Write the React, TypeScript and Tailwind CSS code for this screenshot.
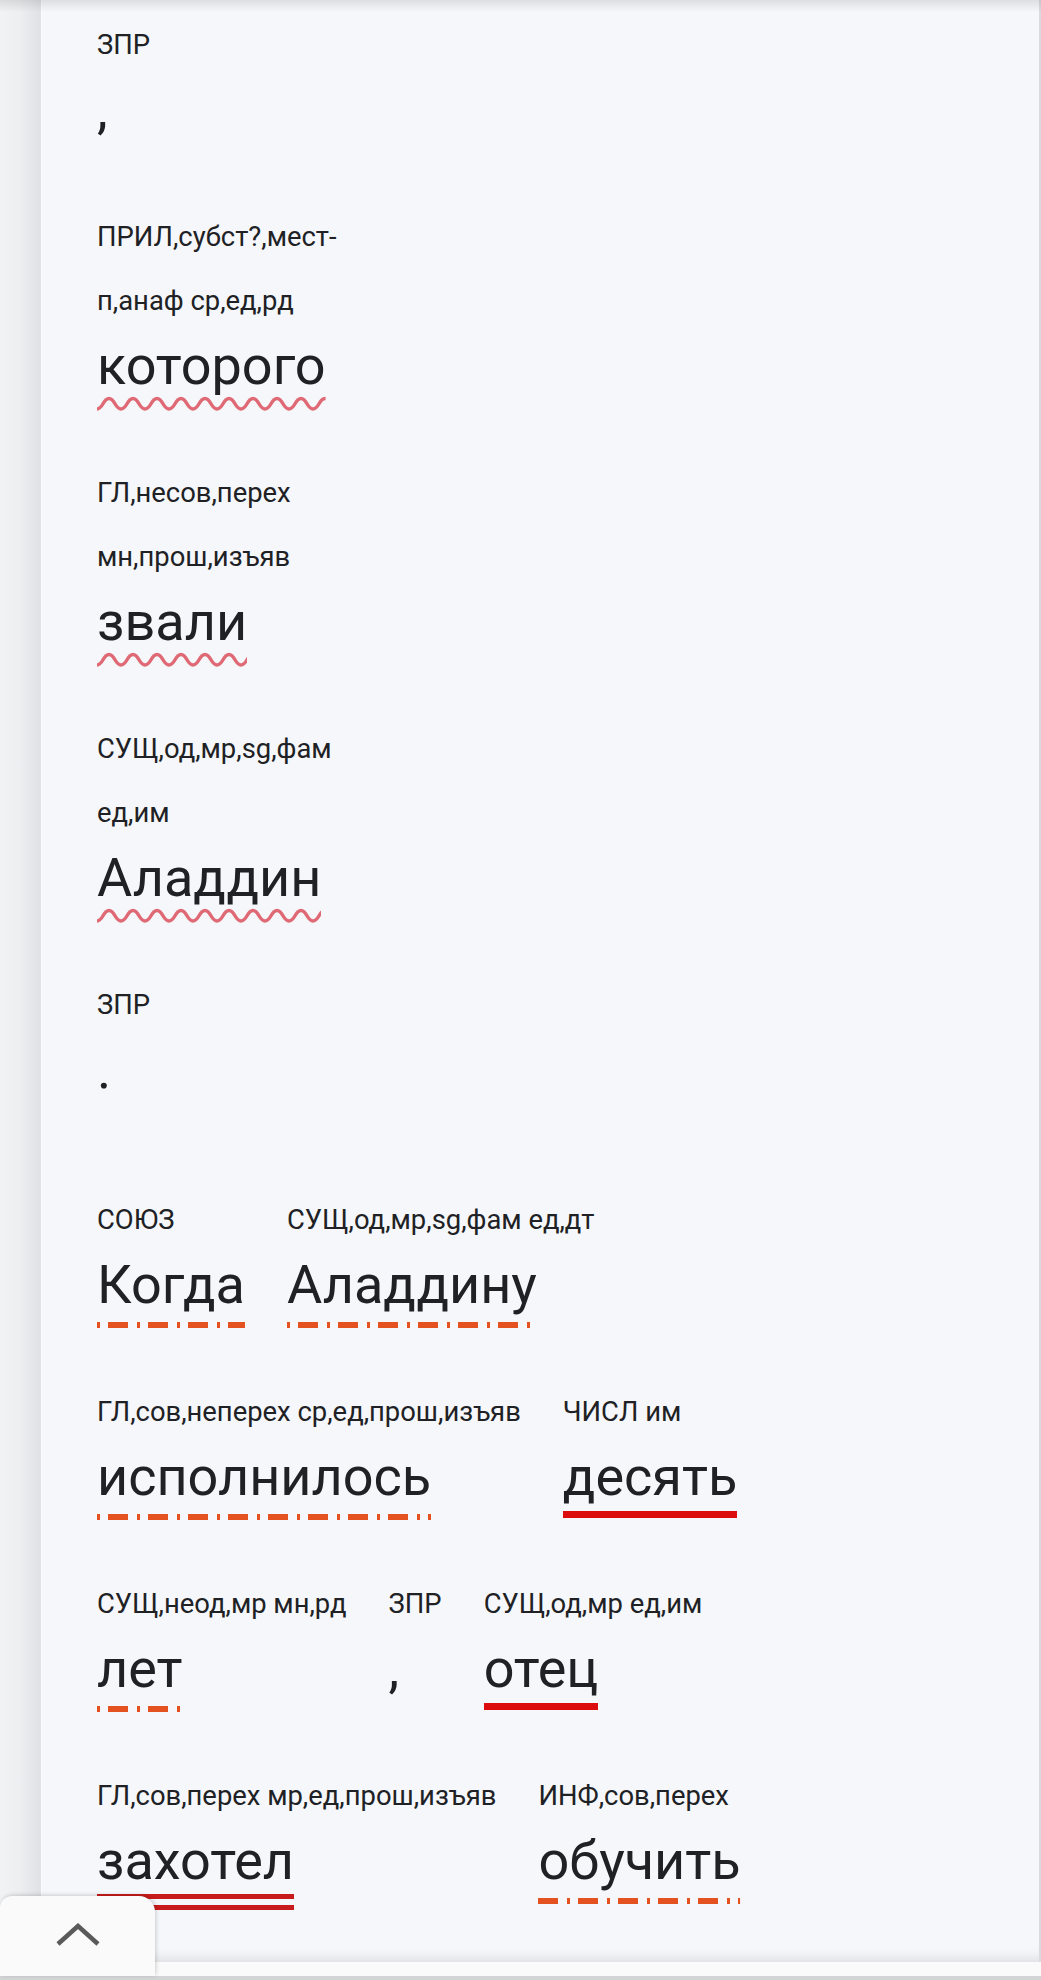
import { useId } from "react";

type Mark = "wavy" | "dashdot" | "solid" | "double" | null;

type Token = {
  label: string[];
  word: string;
  mark: Mark;
  phase?: number;
};

const tail: Token[] = [
  { label: ["ЗПР"], word: ",", mark: null },
  { label: ["ПРИЛ,субст?,мест-", "п,анаф ср,ед,рд"], word: "которого", mark: "wavy" },
  { label: ["ГЛ,несов,перех", "мн,прош,изъяв"], word: "звали", mark: "wavy" },
  { label: ["СУЩ,од,мр,sg,фам", "ед,им"], word: "Аладдин", mark: "wavy" },
  { label: ["ЗПР"], word: ".", mark: null },
];

const rows: Token[][] = [
  [
    { label: ["СОЮЗ"], word: "Когда", mark: "dashdot" },
    { label: ["СУЩ,од,мр,sg,фам ед,дт"], word: "Аладдину", mark: "dashdot" },
  ],
  [
    { label: ["ГЛ,сов,неперех ср,ед,прош,изъяв"], word: "исполнилось", mark: "dashdot" },
    { label: ["ЧИСЛ им"], word: "десять", mark: "solid" },
  ],
  [
    { label: ["СУЩ,неод,мр мн,рд"], word: "лет", mark: "dashdot" },
    { label: ["ЗПР"], word: ",", mark: null },
    { label: ["СУЩ,од,мр ед,им"], word: "отец", mark: "solid" },
  ],
  [
    { label: ["ГЛ,сов,перех мр,ед,прош,изъяв"], word: "захотел", mark: "double" },
    { label: ["ИНФ,сов,перех"], word: "обучить", mark: "dashdot", phase: 11 },
  ],
];

function Wave() {
  const id = useId();
  return (
    <svg className="block w-0 min-w-full h-[16px]" aria-hidden>
      <defs>
        <pattern id={id} width="24" height="16" patternUnits="userSpaceOnUse">
          <path
            d="M0 13 C6 13 6 2.5 12 2.5 C18 2.5 18 13 24 13"
            fill="none"
            stroke="#df6a76"
            strokeWidth="3.5"
          />
        </pattern>
      </defs>
      <rect width="100%" height="16" fill={`url(#${id})`} />
    </svg>
  );
}

function Underline({ mark, phase = 0 }: { mark: Mark; phase?: number }) {
  if (mark === "wavy") return <Wave />;
  if (mark === "dashdot")
    return (
      <svg className="block w-0 min-w-full h-[6px] mt-[7px]" aria-hidden>
        <line
          x1="0"
          x2="100%"
          y1="3"
          y2="3"
          stroke="#e4531f"
          strokeWidth="6"
          strokeDasharray="3 8 20 9"
          strokeDashoffset={phase}
        />
      </svg>
    );
  if (mark === "solid") return <div className="mt-[4px] h-[7px] bg-[#dc0d0d]" />;
  if (mark === "double")
    return (
      <div className="mt-[3px] flex flex-col gap-[6px]">
        <div className="h-[5px] bg-[#c81b1b]" />
        <div className="h-[5px] bg-[#c81b1b]" />
      </div>
    );
  return null;
}

function Word({ t }: { t: Token }) {
  return (
    <div className="flex flex-col items-start">
      <div className="text-[27.4px] leading-[64px] whitespace-nowrap">
        {t.label.map((l) => (
          <div key={l}>{l}</div>
        ))}
      </div>
      <div className="mt-[3px] flex flex-col h-[84px]">
        <span className="text-[54px] leading-[60px] whitespace-nowrap">{t.word}</span>
        <Underline mark={t.mark} phase={t.phase} />
      </div>
    </div>
  );
}

export default function App() {
  return (
    <div className="relative w-[1041px] h-[1980px] overflow-hidden bg-[#f1f2f4] font-['Roboto',sans-serif] text-[#202124]">
      <div className="flex h-[1962px]">
        <div className="w-[41px] shrink-0 bg-linear-to-r from-[#f2f3f5] via-[#eceef0] to-[#dfe1e4]" />
        <main className="flex-1 bg-[#f5f7fa] border-l border-[#fbfcfd] border-r-2 border-r-[#d9dbde] pl-[55px] pt-[13px] shadow-[inset_0_-14px_12px_-10px_rgba(0,0,0,0.10)]">
          <section className="flex flex-col gap-[41px]">
            {tail.map((t, i) => (
              <Word key={i} t={t} />
            ))}
          </section>
          <section className="mt-[64px] flex flex-col gap-[41px]">
            {rows.map((row, i) => (
              <div key={i} className="flex gap-[42px]">
                {row.map((t, j) => (
                  <Word key={j} t={t} />
                ))}
              </div>
            ))}
          </section>
        </main>
      </div>

      <div className="h-[18px] bg-[#fafafa] border-b-4 border-[#d3d4d6] shadow-[0_-2px_4px_rgba(0,0,0,0.08)]" />

      <div className="absolute left-0 bottom-[4px] w-[155px] h-[80px] bg-[#fafafa] rounded-tl-[12px] rounded-tr-[16px] shadow-[1px_-1px_4px_rgba(0,0,0,0.18)] flex justify-center pt-[27px]">
        <svg width="44" height="24" viewBox="0 0 44 24" aria-hidden>
          <polyline points="2,21 22,3 42,21" fill="none" stroke="#5a5a5a" strokeWidth="4.5" />
        </svg>
      </div>

      <div className="absolute inset-x-0 top-0 h-[12px] bg-linear-to-b from-black/10 to-transparent" />
    </div>
  );
}
